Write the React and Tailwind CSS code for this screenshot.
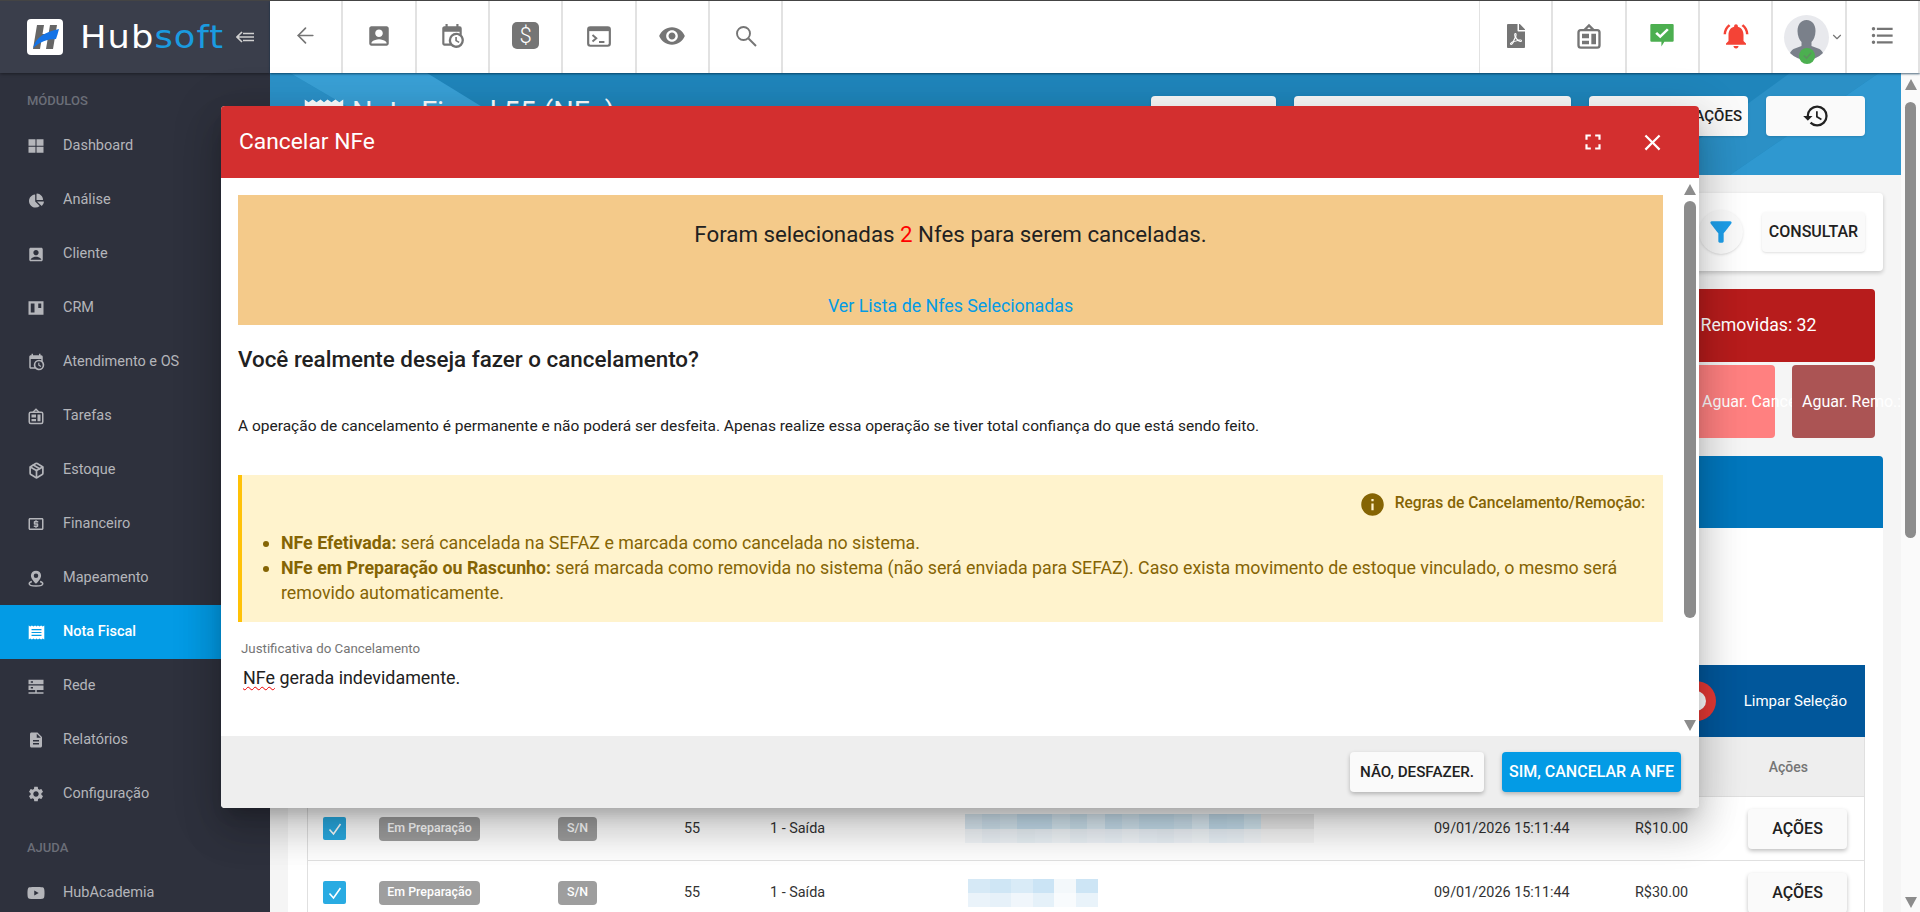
import { ArrowLeft, Package, ChevronDown } from 'lucide-react';
import {
  MdAccountBox, MdClose, MdDescription, MdFilterAlt, MdFormatListBulleted, MdFullscreen, MdHistory,
  MdInfo, MdLocalAtm, MdNotificationsActive, MdRemoveRedEye, MdSettings,
} from 'react-icons/md';
import { FaChartPie, FaFilePdf, FaYoutube } from 'react-icons/fa';

const CALENDAR_CLOCK = 'M15,13H16.5V15.82L18.94,17.23L18.19,18.53L15,16.69V13M19,8H5V19H9.67C9.24,18.09 9,17.07 9,16A7,7 0 0,1 16,9C17.07,9 18.09,9.24 19,9.67V8M5,21C3.89,21 3,20.1 3,19V5C3,3.89 3.89,3 5,3H6V1H8V3H16V1H18V3H19A2,2 0 0,1 21,5V11.1C22.24,12.36 23,14.09 23,16A7,7 0 0,1 16,23C14.09,23 12.36,22.24 11.1,21H5M16,11.15A4.85,4.85 0 0,0 11.15,16C11.15,18.68 13.32,20.85 16,20.85A4.85,4.85 0 0,0 20.85,16C20.85,13.32 18.68,11.15 16,11.15Z';

function CalendarClock({ size = 24 }) {
  return (
    <svg width={size} height={size} viewBox="0 0 24 24" fill="currentColor">
      <path d={CALENDAR_CLOCK} />
    </svg>
  );
}

function BoardIcon({ size = 24 }) {
  return (
    <svg width={size} height={size} viewBox="0 0 24 24" fill="none" stroke="currentColor" strokeWidth="2">
      <rect x="3" y="7" width="18" height="15" rx="2" />
      <path d="M8 7l4-4 4 4" />
      <path fill="currentColor" stroke="none" d="M6 10h6v4H6zM6 16h6v3H6zM14 10h4v9h-4z" />
    </svg>
  );
}

function KanbanIcon({ size = 18 }) {
  return (
    <svg width={size} height={size} viewBox="0 0 24 24" fill="currentColor" fillRule="evenodd">
      <path d="M2 3h20v18H2zM5 6v12h5V6zM15 6v6h4V6z" />
    </svg>
  );
}

function GridIcon({ size = 18 }) {
  return (
    <svg width={size} height={size} viewBox="0 0 24 24" fill="currentColor">
      <path d="M2 3h9.3v8.5H2zM12.7 3H22v8.5h-9.3zM2 12.9h9.3V21H2zM12.7 12.9H22V21h-9.3z" />
    </svg>
  );
}

function PinIcon({ size = 20 }) {
  return (
    <svg width={size} height={size} viewBox="0 0 24 24" fill="currentColor">
      <path fillRule="evenodd" d="M12 1.5A6.8 6.8 0 0 0 5.2 8.3C5.2 13 12 19 12 19s6.8-6 6.8-10.7A6.8 6.8 0 0 0 12 1.5zM12 5.3a3 3 0 1 1 0 6 3 3 0 0 1 0-6z" />
      <path fill="none" stroke="currentColor" strokeWidth="2" d="M6.5 16C4 16.7 3 17.8 3 19c0 1.8 4 3 9 3s9-1.2 9-3c0-1.2-1-2.3-3.5-3" />
    </svg>
  );
}

function ServerIcon({ size = 19 }) {
  return (
    <svg width={size} height={size} viewBox="0 0 24 24" fill="currentColor" fillRule="evenodd">
      <path d="M2 3h20v6H2zM5 5v2h3V5zM2 10.5h20v6H2zM5 12.5v2h3v-2zM11 16.5h2v3h9v2H2v-2h9z" />
    </svg>
  );
}

function ReceiptIcon({ className, lines = 'stroke-[#039be5]' }) {
  return (
    <svg className={className} viewBox="0 0 24 24">
      <path fill="#fff" d="M1 2l2.2 1.5L5.5 2l2.2 1.5L10 2l2 1.5L14 2l2.3 1.5L18.5 2l2.3 1.5L23 2v20l-2.2-1.5-2.3 1.5-2.2-1.5L14 22l-2-1.5-2 1.5-2.3-1.5L5.5 22l-2.3-1.5L1 22z" />
      <path className={lines} strokeWidth="1.6" d="M5 8h14M5 12h14M5 16h14" />
    </svg>
  );
}

const menu = [
  { label: 'Dashboard', icon: <GridIcon size={18} /> },
  { label: 'Análise', icon: <FaChartPie size={15} /> },
  { label: 'Cliente', icon: <MdAccountBox size={19} /> },
  { label: 'CRM', icon: <KanbanIcon size={18} /> },
  { label: 'Atendimento e OS', icon: <CalendarClock size={18} /> },
  { label: 'Tarefas', icon: <BoardIcon size={18} /> },
  { label: 'Estoque', icon: <Package size={17} strokeWidth={2.4} /> },
  { label: 'Financeiro', icon: <MdLocalAtm size={20} /> },
  { label: 'Mapeamento', icon: <PinIcon size={19} /> },
  { label: 'Nota Fiscal', active: true, icon: <ReceiptIcon className="w-[17px] h-[17px]" /> },
  { label: 'Rede', icon: <ServerIcon size={19} /> },
  { label: 'Relatórios', icon: <MdDescription size={18} /> },
  { label: 'Configuração', icon: <MdSettings size={18} /> },
];

function SideItem({ item }) {
  return (
    <div className={`h-[54px] shrink-0 flex items-center pl-[27px] text-[14.5px] ${item.active ? 'bg-[#039be5] text-white font-medium' : 'text-[#b4b5ba]'}`}>
      <span className="w-[18px] flex justify-center">{item.icon}</span>
      <span className="ml-[18px]">{item.label}</span>
    </div>
  );
}

function Sidebar() {
  return (
    <aside className="w-[270px] shrink-0 bg-[#2e313d] flex flex-col overflow-hidden">
      <div className="h-[72px] shrink-0 bg-[#3a3e4b] flex items-center pl-[27px] shadow-[0_1px_3px_rgba(0,0,0,0.4)]">
        <div className="w-9 h-9 rounded bg-white flex items-center justify-center">
          <svg width="30" height="30" viewBox="0 0 30 30">
            <path fill="#666" d="M7 3h7l-4 24H3zM20 3h7l-4 24h-7zM10 12h12l-1 6H9z" />
            <path fill="#1473e6" d="M3 26C6 15 15 10 29 7c-1 4-2 7-3 10-9 0-16 3-23 9z" />
          </svg>
        </div>
        <span className="ml-[17px] w-[157px] shrink-0 origin-left scale-x-[1.1] whitespace-nowrap font-['DejaVu_Sans',sans-serif] text-[32px] tracking-[1px] text-white">
          Hub<span className="text-[#1a9be0]">soft</span>
        </span>
        <svg className="-ml-[1px]" width="18" height="12" viewBox="0 0 18 12" fill="none" stroke="#d0d0d0" strokeWidth="1.6">
          <path d="M6 1L1 6l5 5M2 6h16M7 2.5h11M7 9.5h11" />
        </svg>
      </div>
      <div className="h-[46px] shrink-0 pt-[9px] pl-[27px] flex items-center text-[13px] font-medium text-[#6b6e78]">MÓDULOS</div>
      {menu.map((item) => <SideItem key={item.label} item={item} />)}
      <div className="h-[45px] shrink-0 pt-[8px] pl-[27px] flex items-center text-[13px] font-medium text-[#6b6e78]">AJUDA</div>
      <SideItem item={{ label: 'HubAcademia', icon: <FaYoutube size={18} /> }} />
    </aside>
  );
}

function ToolCell({ children }) {
  return <div className="w-[73.33px] shrink-0 h-full flex items-center justify-center border-r-2 border-[#e2e2e2] text-[#757575] pb-[3px]">{children}</div>;
}

function Topbar() {
  return (
    <header className="relative z-10 h-[72px] shrink-0 bg-white flex justify-between shadow-[0_1px_2px_rgba(0,40,70,0.7)]">
      <div className="flex h-full">
        <ToolCell><ArrowLeft size={25} strokeWidth={1.6} /></ToolCell>
        <ToolCell><MdAccountBox size={26} /></ToolCell>
        <ToolCell><CalendarClock size={26} /></ToolCell>
        <ToolCell>
          <span className="w-[27px] h-[27px] rounded-[5px] bg-[#757575] text-white text-[22px] font-light flex items-center justify-center">$</span>
        </ToolCell>
        <ToolCell>
          <svg width="26" height="26" viewBox="0 0 24 24" fill="none" stroke="currentColor" strokeWidth="2">
            <rect x="2" y="4" width="20" height="17" rx="2" />
            <path strokeWidth="3" d="M2 6h20" />
            <path strokeWidth="1.8" d="M6 11l3.5 3L6 17M12 17.5h5" />
          </svg>
        </ToolCell>
        <ToolCell><MdRemoveRedEye size={28} /></ToolCell>
        <ToolCell>
          <svg width="24" height="24" viewBox="0 0 24 24" fill="none" stroke="currentColor" strokeWidth="1.9">
            <circle cx="9.5" cy="9.5" r="6.5" />
            <path d="M14.5 14.5l7.5 7.5" />
          </svg>
        </ToolCell>
      </div>
      <div className="flex h-full border-l border-[#e2e2e2]">
        <ToolCell><FaFilePdf size={24} /></ToolCell>
        <ToolCell><BoardIcon size={28} /></ToolCell>
        <ToolCell>
          <svg width="28" height="25" viewBox="0 0 24 24" preserveAspectRatio="none">
            <path fill="#4caf50" d="M3 1h18a1 1 0 0 1 1 1v15a1 1 0 0 1-1 1h-7l-2.5 4.5V18H3a1 1 0 0 1-1-1V2a1 1 0 0 1 1-1z" />
            <path fill="none" stroke="#fff" strokeWidth="2.2" d="M7 9.5l3.5 3.5 6.5-7" />
          </svg>
        </ToolCell>
        <ToolCell><span className="text-[#f44336]"><MdNotificationsActive size={30} /></span></ToolCell>
        <div className="w-[73.33px] shrink-0 h-full flex items-center border-r-2 border-[#e2e2e2] pl-[11px]">
          <div className="relative w-[45px] h-[45px] rounded-full bg-[#e8e9ed]">
            <svg className="rounded-full" width="45" height="45" viewBox="0 0 45 45">
              <path fill="#7a808a" d="M22.5 5c6 0 9 5 9 11 0 5-2 9-4 11v4l8 3c2 1 3 3 4 5a22 22 0 0 1-34 0c1-2 2-4 4-5l8-3v-4c-2-2-4-6-4-11 0-6 3-11 9-11z" />
            </svg>
            <span className="absolute left-[15px] top-[33px] w-4 h-4 rounded-full bg-[#4caf50] flex items-center justify-center">
              <svg width="11" height="11" viewBox="0 0 12 12" fill="none" stroke="#5d8f60" strokeWidth="1.6"><path d="M2 6l3 3 5-6" /></svg>
            </span>
          </div>
          <ChevronDown className="ml-[1px] text-[#757575]" size={14} />
        </div>
        <ToolCell><MdFormatListBulleted size={27} /></ToolCell>
      </div>
    </header>
  );
}

function Banner() {
  return (
    <div className="relative h-[102px] shrink-0 bg-[#1f85bb] flex items-start justify-between pt-[23px] pr-[36px] pl-[33px] overflow-hidden">
      <svg className="absolute inset-0 w-full h-full" viewBox="0 0 1631 102" preserveAspectRatio="none">
        <path fill="#2b91c8" d="M0 0h20l174 102H0z" />
        <path fill="#39a0d6" d="M20 0h137l166 102H194z" />
        <path fill="#2b90c6" d="M1520 0h89L1460 102h-80z" />
        <path fill="#2f98d0" d="M1609 0h22v102h-171z" />
      </svg>
      <div className="relative flex items-start">
        <ReceiptIcon className="w-[42px] h-[42px]" lines="stroke-[#2196c9]" />
        <span className="ml-[7px] text-white text-[28.8px] leading-[32px]">Nota Fiscal 55 (NFe)</span>
      </div>
      <div className="relative flex text-[15px] font-medium text-[#212121]">
        <button className="w-[125px] h-10 rounded bg-[#fafafa] shadow">FILTROS</button>
        <button className="ml-[18px] w-[277px] h-10 rounded bg-[#fafafa] shadow">EMISSÃO EM LOTE</button>
        <button className="ml-[18px] w-[159px] h-10 rounded bg-[#fafafa] shadow flex items-center justify-end pr-[6px]">INTEGRAÇÕES</button>
        <button className="ml-[18px] w-[99px] h-10 rounded bg-[#fafafa] shadow flex items-center justify-center"><MdHistory size={28} /></button>
      </div>
    </div>
  );
}

const rowOneTop = ['bg-[#dbeaf4]', 'bg-[#d1e4f0]', 'bg-[#d6e8f2]', 'bg-[#c6dfee]', 'bg-[#c6dfee]', 'bg-[#d7e9f3]', 'bg-[#cde3ef]', 'bg-[#ddecf5]', 'bg-[#c8e0ee]', 'bg-[#d3e6f1]', 'bg-[#c7e0ee]', 'bg-[#c7e0ee]', 'bg-[#cfe4f0]', 'bg-[#deedf6]', 'bg-[#c3ddec]', 'bg-[#c6dfed]', 'bg-[#d4e8f2]', 'bg-[#ececec]', 'bg-[#ececec]', 'bg-[#ececec]'];
const rowOneBottom = ['bg-[#f3f7fa]', 'bg-[#edf3f8]', 'bg-[#f0f5f9]', 'bg-[#eaf2f7]', 'bg-[#edf4f9]', 'bg-[#f2f7fa]', 'bg-[#ecf3f8]', 'bg-[#f0f5fa]', 'bg-[#edf4fa]', 'bg-[#f2f7fb]', 'bg-[#edf4fa]', 'bg-[#ebf2f8]', 'bg-[#f0f5fa]', 'bg-[#f3f8fb]', 'bg-[#ebf3f9]', 'bg-[#edf4f9]', 'bg-[#f3f7fa]', 'bg-[#f8f8f8]', 'bg-[#f8f8f8]', 'bg-[#f8f8f8]'];
const rowTwoTop = ['bg-[#d6e9f6]', 'bg-[#cfe6f5]', 'bg-[#d9ebf7]', 'bg-[#cbe4f5]', 'bg-[#f3f8fb]', 'bg-[#cde5f5]'];
const rowTwoBottom = ['bg-[#eaf3fa]', 'bg-[#e6f1f9]', 'bg-[#f0f6fb]', 'bg-[#e5f1f9]', 'bg-[#f8fbfd]', 'bg-[#e9f3fa]'];

function Pixels({ top, bottom, cellWidth, rowHeight }) {
  return (
    <div>
      {[top, bottom].map((row, i) => (
        <div key={i} className="flex">
          {row.map((c, j) => <span key={j} className={c} style={{ width: cellWidth, height: rowHeight }} />)}
        </div>
      ))}
    </div>
  );
}

function Row({ value, pixels }) {
  return (
    <div className="h-16 grid grid-cols-[71px_179px_126px_86px_195px_469px_201px_113px_118px] items-center border-b border-[#e0e0e0] text-[14.4px] text-[#333]">
      <div className="pl-[15px]">
        <span className="w-[23px] h-[23px] rounded-[2px] bg-[#29abe2] flex items-center justify-center">
          <svg width="18" height="18" viewBox="0 0 18 18" fill="none" stroke="#fff" strokeWidth="1.6"><path d="M3.5 9.5l4 4.5 7-10" /></svg>
        </span>
      </div>
      <div><span className="inline-flex w-[101px] h-6 items-center justify-center rounded bg-[#9e9e9e] text-white text-[12.4px] font-medium">Em Preparação</span></div>
      <div><span className="inline-flex w-[39px] h-6 items-center justify-center rounded bg-[#9e9e9e] text-white text-[12.4px] font-medium">S/N</span></div>
      <div>55</div>
      <div>1 - Saída</div>
      <div>{pixels}</div>
      <div>09/01/2026 15:11:44</div>
      <div>{value}</div>
      <div><button className="w-[99px] h-10 rounded bg-[#fafafa] shadow-[0_2px_4px_rgba(0,0,0,0.25)] text-base font-medium text-[#212121]">AÇÕES</button></div>
    </div>
  );
}

function Content() {
  return (
    <div className="flex-1 min-w-0 h-full bg-[#f5f5f5] flex flex-col overflow-hidden">
      <Banner />
      <div className="px-[18px] flex flex-col">
        <div className="mt-[18px] h-[78px] shrink-0 bg-white rounded shadow-[0_2px_4px_rgba(0,0,0,0.2)] flex items-center justify-end pr-[18px]">
          <span className="w-11 h-11 rounded-full bg-[#fafafa] shadow flex items-center justify-center text-[#1e9fea]"><MdFilterAlt size={32} /></span>
          <button className="ml-[19px] w-[103px] h-10 rounded bg-[#fafafa] shadow text-base font-medium text-[#212121]">CONSULTAR</button>
        </div>
        <div className="mt-[18px] flex justify-end pr-[8px]">
          <div className="w-[233px] h-[73px] rounded bg-[#b71c1c] text-white text-[17.7px] flex items-center justify-center">Removidas: 32</div>
        </div>
        <div className="mt-[3px] flex justify-end gap-[17px] pr-[8px] text-white text-base whitespace-nowrap">
          <div className="w-[83px] h-[73px] rounded bg-[#ff8080] flex items-center pl-[10px]">Aguar. Cance</div>
          <div className="w-[83px] h-[73px] rounded bg-[#ab5454] flex items-center pl-[10px]">Aguar. Remo.:</div>
        </div>
        <div className="mt-[18px] h-[72px] rounded-t bg-[#0277bd]" />
        <div className="bg-white h-[700px] pt-[137px] pl-[19px] pr-[18px]">
          <div className="h-[72px] bg-[#01579b] flex items-center justify-end pr-[18px] text-white text-[15px]">
            <span className="w-10 h-10 rounded-full bg-[#e53935] flex items-center justify-center"><span className="w-5 h-5 rounded-full bg-white" /></span>
            <span className="ml-[28px]">Limpar Seleção</span>
          </div>
          <div className="border-x border-[#e0e0e0]">
            <div className="h-[60px] bg-[#eee] border-b border-[#e0e0e0] flex items-center justify-end pr-[56px] text-sm font-medium text-[#757575]">Ações</div>
            <Row value="R$10.00" pixels={<Pixels top={rowOneTop} bottom={rowOneBottom} cellWidth="17.45px" rowHeight="14.5px" />} />
            <Row value="R$30.00" pixels={<div className="pl-[3px]"><Pixels top={rowTwoTop} bottom={rowTwoBottom} cellWidth="21.6px" rowHeight="14px" /></div>} />
          </div>
        </div>
      </div>
    </div>
  );
}

function Arrow({ down }) {
  return (
    <svg width="12" height="11" viewBox="0 0 12 11" fill="#8c8c8c">
      <path d={down ? 'M0 0h12L6 11z' : 'M6 0L12 11H0z'} />
    </svg>
  );
}

function Dialog() {
  return (
    <div className="absolute left-[221px] top-[105px] z-20 w-[1478px] h-[702px] rounded bg-white flex flex-col overflow-hidden shadow-[0_11px_15px_-7px_rgba(0,0,0,0.2),0_24px_38px_3px_rgba(0,0,0,0.14),0_9px_46px_8px_rgba(0,0,0,0.12)]">
      <div className="h-[72px] shrink-0 bg-[#d32f2f] text-white flex items-center pl-[18px]">
        <h2 className="text-[22.8px]">Cancelar NFe</h2>
        <MdFullscreen className="ml-auto" size={26} />
        <MdClose className="ml-[33px] mr-[33px]" size={27} />
      </div>
      <div className="flex-1 min-h-0 flex">
        <div className="w-[1442px] shrink-0 pl-[17px] pt-[17px]">
          <div className="h-[130px] bg-[#f4ca8a] flex flex-col items-center pt-[24px]">
            <p className="text-[22.3px] leading-[30px] text-[#212121]">Foram selecionadas <span className="text-[#f00]">2</span> Nfes para serem canceladas.</p>
            <a className="mt-[45px] text-[17.8px] leading-6 text-[#039be5]">Ver Lista de Nfes Selecionadas</a>
          </div>
          <h3 className="mt-[19px] text-[22.4px] leading-[30px] font-medium text-[#212121]">Você realmente deseja fazer o cancelamento?</h3>
          <p className="mt-[42px] text-[15.5px] leading-5 text-[#212121]">A operação de cancelamento é permanente e não poderá ser desfeita. Apenas realize essa operação se tiver total confiança do que está sendo feito.</p>
          <div className="mt-[39px] h-[147px] bg-[#fff3cd] border-l-4 border-[#ffc107] text-[#856404] pt-[19px]">
            <div className="flex items-center justify-end pr-[18px] h-5 text-[15.6px] font-medium">
              <MdInfo size={27} />
              <span className="ml-[9px]">Regras de Cancelamento/Remoção:</span>
            </div>
            <ul className="mt-[16px] list-disc pl-[39px] pr-[20px] text-[17.8px] leading-[25px]">
              <li><strong className="font-bold">NFe Efetivada:</strong> será cancelada na SEFAZ e marcada como cancelada no sistema.</li>
              <li><strong className="font-bold">NFe em Preparação ou Rascunho:</strong> será marcada como removida no sistema (não será enviada para SEFAZ). Caso exista movimento de estoque vinculado, o mesmo será removido automaticamente.</li>
            </ul>
          </div>
          <label className="block mt-[19px] pl-[3px] text-[13.3px] leading-4 text-[#757575]">Justificativa do Cancelamento</label>
          <p className="mt-[9px] pl-[5px] text-[17.9px] leading-6 text-[#212121]">
            <span className="underline decoration-wavy decoration-[#e00] decoration-1 underline-offset-2">NFe</span> gerada indevidamente.
          </p>
        </div>
        <div className="flex-1 flex flex-col items-end pt-[6px] pb-[5px] pr-[3px]">
          <Arrow />
          <div className="mt-[6px] w-[12px] h-[417px] rounded-full bg-[#8c8c8c]" />
          <div className="mt-auto"><Arrow down /></div>
        </div>
      </div>
      <div className="h-[72px] shrink-0 bg-[#eee] flex items-center justify-end pr-[18px] font-medium">
        <button className="w-[134px] h-10 rounded bg-[#fafafa] text-[15.2px] text-[#212121] shadow-[0_2px_4px_rgba(0,0,0,0.25)]">NÃO, DESFAZER.</button>
        <button className="ml-[18px] w-[179px] h-10 rounded bg-[#039be5] text-base text-white shadow-[0_2px_4px_rgba(0,0,0,0.25)]">SIM, CANCELAR A NFE</button>
      </div>
    </div>
  );
}

export default function App() {
  return (
    <div className="relative h-[912px] w-[1920px] overflow-hidden border-t border-[#444] flex font-['Roboto',sans-serif] bg-[#f5f5f5]">
      <Sidebar />
      <div className="flex-1 min-w-0 flex flex-col">
        <Topbar />
        <div className="flex-1 min-h-0 flex">
          <Content />
          <div className="w-[19px] shrink-0 bg-[#fafafa] flex flex-col items-center pt-[6px] pb-[4px] pl-[4px] pr-[4px]">
            <Arrow />
            <div className="mt-[12px] w-[11px] h-[436px] shrink-0 rounded-full bg-[#8c8c8c]" />
            <div className="mt-auto"><Arrow down /></div>
          </div>
        </div>
      </div>
      <Dialog />
    </div>
  );
}
